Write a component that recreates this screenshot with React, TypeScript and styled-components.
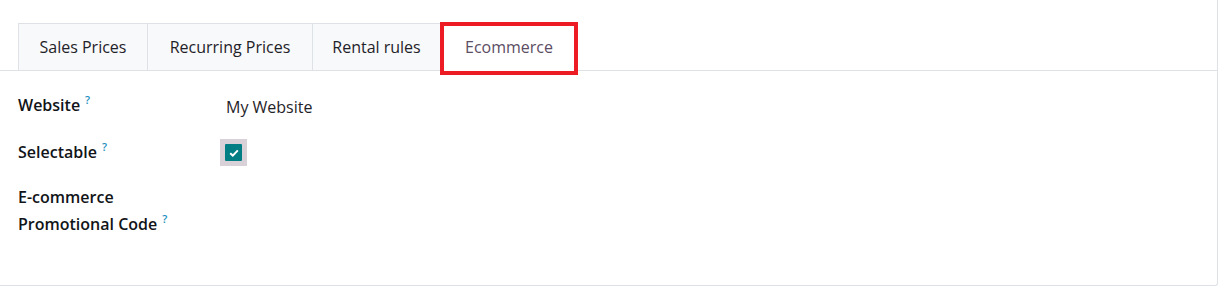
import styled, { createGlobalStyle } from 'styled-components';

const GlobalStyle = createGlobalStyle`
  body {
    margin: 0;
    background: #ffffff;
    font-family: 'Open Sans', 'Noto Sans', sans-serif;
    color: #212529;
  }
`;

const tabs = [
  { name: 'Sales Prices', width: 129 },
  { name: 'Recurring Prices', width: 165 },
  { name: 'Rental rules', width: 128 },
  { name: 'Ecommerce', width: 138 },
];

export default function App() {
  const active = 'Ecommerce';

  return (
    <>
      <GlobalStyle />
      <Card>
        <TabNav>
          {tabs.map(tab => (
            <Tab key={tab.name} active={tab.name === active} w={tab.width}>
              {tab.name}
              {tab.name === active && <Highlight />}
            </Tab>
          ))}
        </TabNav>
        <Form>
          <Label>
            Website<Help>?</Help>
          </Label>
          <Value>My Website</Value>
          <Label>
            Selectable<Help>?</Help>
          </Label>
          <Value>
            <CheckWrap>
              <CheckBox>
                <svg width="10" height="8" viewBox="0 0 10 8">
                  <path d="M1.2 4.2 L3.8 6.6 L8.8 1.4" fill="none" stroke="#ffffff" strokeWidth="2" />
                </svg>
              </CheckBox>
            </CheckWrap>
          </Value>
          <Label>
            E-commerce
            <br />
            Promotional Code<Help>?</Help>
          </Label>
          <Value />
        </Form>
      </Card>
    </>
  );
}

const Card = styled.div`
  width: 1217px;
  height: 285px;
  border-right: 1px solid #dee2e6;
  border-bottom: 1px solid #dee2e6;
  border-bottom-right-radius: 3px;
  background: #ffffff;
`;

const TabNav = styled.div`
  display: flex;
  padding: 23px 0 0 18px;
  border-bottom: 1px solid #dee2e6;
`;

const Tab = styled.div<{ active?: boolean; w: number }>`
  position: relative;
  box-sizing: border-box;
  width: ${props => `${props.w}px`};
  height: 48px;
  display: flex;
  align-items: center;
  justify-content: center;
  margin-bottom: -1px;
  font-size: 16px;
  color: ${props => (props.active ? '#5b4d63' : '#1f2329')};
  background: ${props => (props.active ? '#ffffff' : '#f8f9fa')};
  border-top: 1px solid #dee2e6;
  border-left: 1px solid #dee2e6;
  border-bottom: 1px solid ${props => (props.active ? '#ffffff' : '#dee2e6')};
  &:last-child {
    border-right: 1px solid #dee2e6;
  }
`;

const Highlight = styled.span`
  position: absolute;
  top: -2px;
  left: -1px;
  right: -1px;
  bottom: -5px;
  border: 4px solid #ed1c24;
`;

const Form = styled.div`
  display: grid;
  grid-template-columns: 208px 1fr;
  row-gap: 18px;
  padding: 21px 0 0 18px;
`;

const Label = styled.div`
  font-size: 16px;
  font-weight: 600;
  line-height: 27px;
  color: #111418;
`;

const Help = styled.span`
  position: relative;
  top: -7px;
  margin-left: 5px;
  font-size: 11px;
  font-weight: 600;
  line-height: 0;
  color: #1a8fc0;
`;

const Value = styled.div`
  font-size: 16px;
  line-height: 27px;
  color: #1f2329;
  display: flex;
  align-items: center;
  padding-top: 2px;
`;

const CheckWrap = styled.div`
  width: 27px;
  height: 27px;
  margin: -2px 0 0 -6px;
  background: #d8d1d8;
  display: flex;
  align-items: center;
  justify-content: center;
`;

const CheckBox = styled.div`
  width: 17px;
  height: 17px;
  border-radius: 1px;
  background: #017e84;
  display: flex;
  align-items: center;
  justify-content: center;
`;
